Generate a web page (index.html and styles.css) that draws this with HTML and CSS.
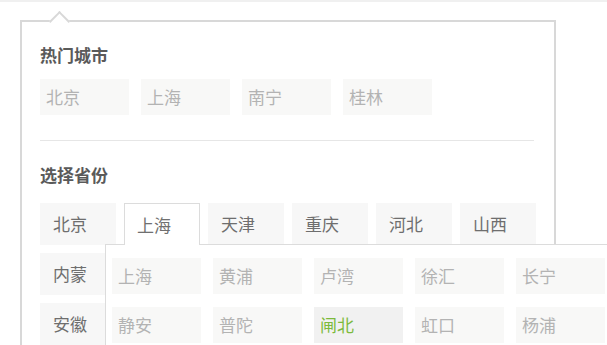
FILE: index.html
```html
<!DOCTYPE html>
<html>
<head>
    <meta charset="utf-8">
    <title>城市选择</title>
    <link rel="stylesheet" href="styles.css">
</head>
<body>
<div class="topline"></div>
<div class="city-panel">
    <h3 class="panel-title">热门城市</h3>
    <ul class="hot-list">
        <li class="city">北京</li>
        <li class="city">上海</li>
        <li class="city">南宁</li>
        <li class="city">桂林</li>
    </ul>
    <div class="divider"></div>
    <h3 class="panel-title">选择省份</h3>
    <div class="province-area">
        <ul class="province-list">
            <li class="prov">北京</li>
            <li class="prov active">上海</li>
            <li class="prov">天津</li>
            <li class="prov">重庆</li>
            <li class="prov">河北</li>
            <li class="prov">山西</li>
            <li class="prov row-start">内蒙</li>
            <li class="prov row-start">安徽</li>
        </ul>
        <!-- districts of the selected province -->
        <ul class="district-pop">
            <li class="city">上海</li>
            <li class="city">黄浦</li>
            <li class="city">卢湾</li>
            <li class="city">徐汇</li>
            <li class="city">长宁</li>
            <li class="city">静安</li>
            <li class="city">普陀</li>
            <li class="city selected">闸北</li>
            <li class="city">虹口</li>
            <li class="city">杨浦</li>
        </ul>
    </div>
</div>
</body>
</html>
```

FILE: styles.css
```css
html, body {
    margin: 0;
    padding: 0;
    height: 345px;
    overflow: hidden;
    background: #ffffff;
    font-family: "Noto Sans CJK SC", "Noto Sans", sans-serif;
}
ul {
    list-style: none;
    margin: 0;
    padding: 0;
}
.topline {
    height: 2px;
    background: #f0f0f0;
}
.city-panel {
    position: relative;
    box-sizing: border-box;
    width: 536px;
    min-height: 420px;
    margin: 18px 0 0 20px;
    padding: 21px 20px 0 18px;
    border: 2px solid #d8d8d8;
    background: #ffffff;
}
.city-panel::before {
    content: "";
    position: absolute;
    left: 30px;
    top: -8px;
    width: 13px;
    height: 13px;
    background: #ffffff;
    border-top: 2px solid #d8d8d8;
    border-left: 2px solid #d8d8d8;
    transform: rotate(45deg);
}
.panel-title {
    margin: 0;
    font-size: 17px;
    line-height: 24px;
    font-weight: bold;
    color: #5a5a5a;
}
.hot-list {
    display: flex;
    gap: 12px;
    margin-top: 12px;
}
.city {
    box-sizing: border-box;
    width: 89px;
    height: 36px;
    padding-left: 6px;
    line-height: 36px;
    font-size: 17px;
    color: #b3b3b3;
    background: #f8f8f7;
}
.divider {
    height: 1px;
    margin: 25px 0 22px;
    background: #e6e6e6;
}
.province-area {
    position: relative;
    margin-top: 16px;
}
.province-list {
    display: grid;
    grid-template-columns: repeat(6, 76px);
    grid-auto-rows: 42px;
    column-gap: 8px;
    row-gap: 8px;
}
.prov {
    box-sizing: border-box;
    padding-left: 13px;
    line-height: 41px;
    font-size: 17px;
    color: #6e6e6e;
    background: #f7f7f7;
}
.prov.row-start {
    grid-column: 1;
}
.prov.active {
    position: relative;
    z-index: 2;
    padding-left: 12px;
    border: 1px solid #dcdcdc;
    border-bottom: none;
    background: #ffffff;
    color: #707070;
}
.district-pop {
    position: absolute;
    z-index: 1;
    left: 65px;
    top: 41px;
    width: 560px;
    height: 140px;
    padding: 13px 0 0 6px;
    display: flex;
    flex-wrap: wrap;
    align-content: flex-start;
    column-gap: 12px;
    row-gap: 13px;
    border-top: 1px solid #dcdcdc;
    border-left: 1px solid #dcdcdc;
    background: #ffffff;
}
.city.selected {
    color: #7cba3c;
    background: #f1f1f1;
}
```
